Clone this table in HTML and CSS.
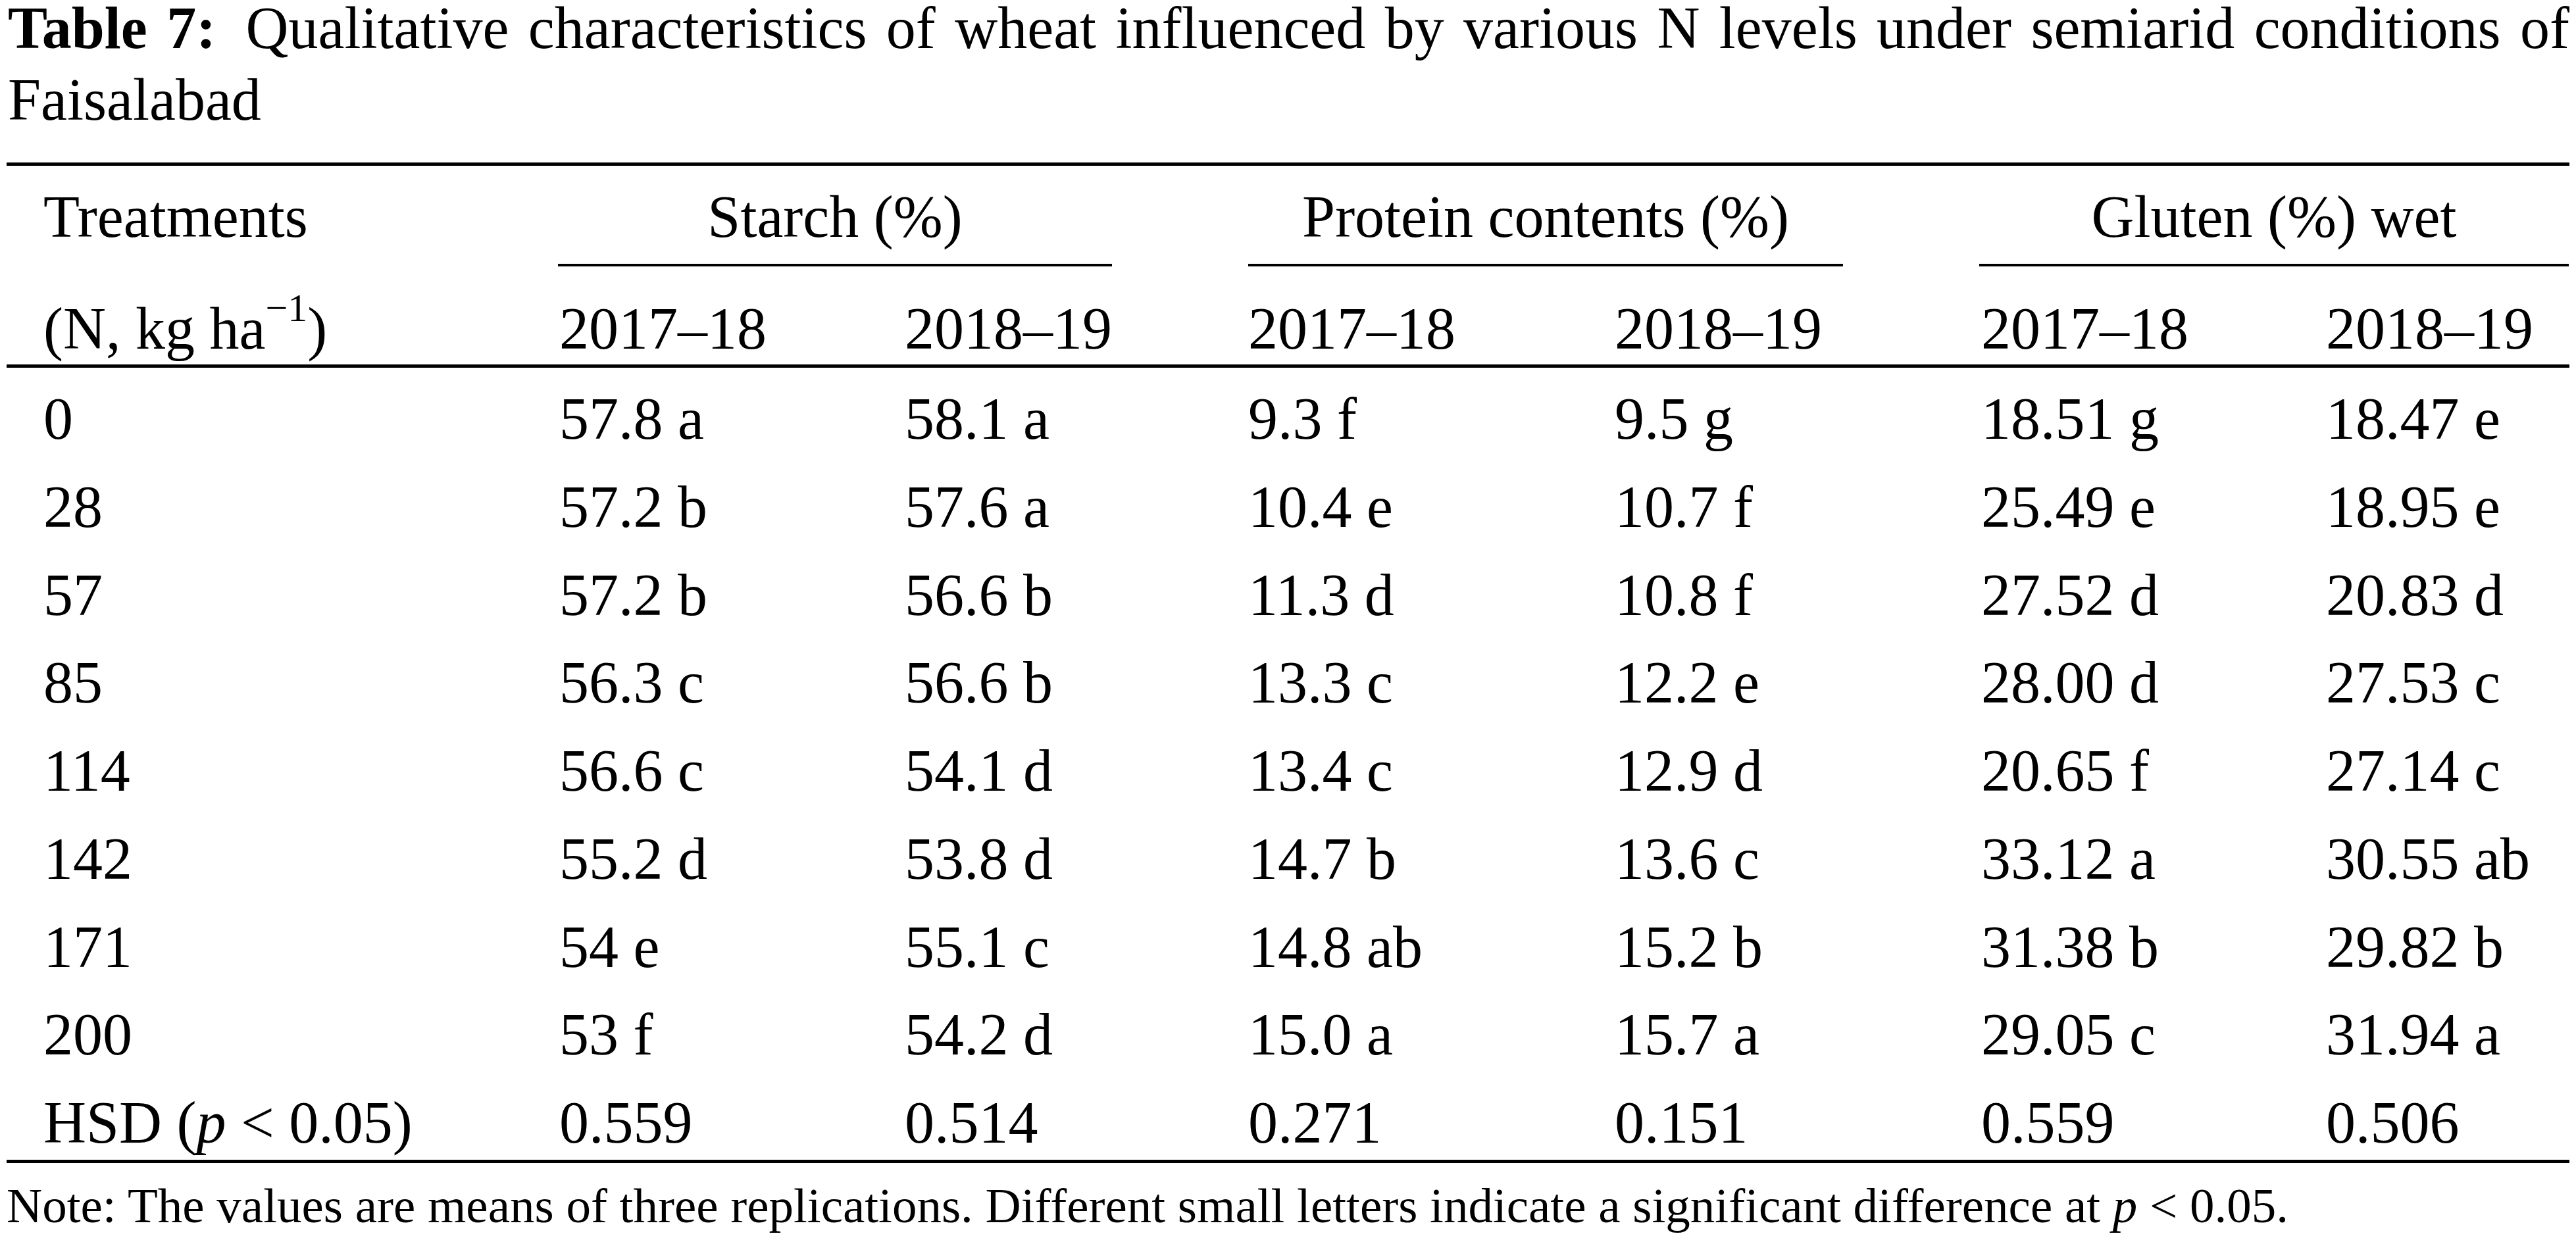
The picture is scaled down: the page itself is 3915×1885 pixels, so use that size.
FILE: index.html
```html
<!DOCTYPE html>
<html lang="en">
<head>
<meta charset="utf-8">
<title>Table 7</title>
<link rel="stylesheet" href="styles.css">
</head>
<body>
<div class="page">
  <p class="caption"><b class="label">Table 7:</b> Qualitative characteristics of wheat influenced by various N levels under semiarid conditions of Faisalabad</p>
  <div class="table">
    <div class="cell h1 first">Treatments</div>
    <div class="cell h1 group g-starch">Starch (%)</div>
    <div class="cell h1 group g-protein">Protein contents (%)</div>
    <div class="cell h1 group g-gluten">Gluten (%) wet</div>

    <div class="cell h2 first">(N, kg ha<sup class="sup">&minus;1</sup>)</div>
    <div class="cell h2">2017–18</div>
    <div class="cell h2">2018–19</div>
    <div class="cell h2">2017–18</div>
    <div class="cell h2">2018–19</div>
    <div class="cell h2">2017–18</div>
    <div class="cell h2">2018–19</div>

    <div class="cell first">0</div><div class="cell">57.8 a</div><div class="cell">58.1 a</div><div class="cell">9.3 f</div><div class="cell">9.5 g</div><div class="cell">18.51 g</div><div class="cell">18.47 e</div>
    <div class="cell first">28</div><div class="cell">57.2 b</div><div class="cell">57.6 a</div><div class="cell">10.4 e</div><div class="cell">10.7 f</div><div class="cell">25.49 e</div><div class="cell">18.95 e</div>
    <div class="cell first">57</div><div class="cell">57.2 b</div><div class="cell">56.6 b</div><div class="cell">11.3 d</div><div class="cell">10.8 f</div><div class="cell">27.52 d</div><div class="cell">20.83 d</div>
    <div class="cell first">85</div><div class="cell">56.3 c</div><div class="cell">56.6 b</div><div class="cell">13.3 c</div><div class="cell">12.2 e</div><div class="cell">28.00 d</div><div class="cell">27.53 c</div>
    <div class="cell first">114</div><div class="cell">56.6 c</div><div class="cell">54.1 d</div><div class="cell">13.4 c</div><div class="cell">12.9 d</div><div class="cell">20.65 f</div><div class="cell">27.14 c</div>
    <div class="cell first">142</div><div class="cell">55.2 d</div><div class="cell">53.8 d</div><div class="cell">14.7 b</div><div class="cell">13.6 c</div><div class="cell">33.12 a</div><div class="cell">30.55 ab</div>
    <div class="cell first">171</div><div class="cell">54 e</div><div class="cell">55.1 c</div><div class="cell">14.8 ab</div><div class="cell">15.2 b</div><div class="cell">31.38 b</div><div class="cell">29.82 b</div>
    <div class="cell first">200</div><div class="cell">53 f</div><div class="cell">54.2 d</div><div class="cell">15.0 a</div><div class="cell">15.7 a</div><div class="cell">29.05 c</div><div class="cell">31.94 a</div>
    <div class="cell first">HSD (<i>p</i> &lt; 0.05)</div><div class="cell">0.559</div><div class="cell">0.514</div><div class="cell">0.271</div><div class="cell">0.151</div><div class="cell">0.559</div><div class="cell">0.506</div>
  </div>
  <p class="note">Note: The values are means of three replications. Different small letters indicate a significant difference at <i>p</i> &lt; 0.05.</p>
</div>
</body>
</html>
```
FILE: styles.css
```css
html, body {
  margin: 0;
  padding: 0;
  background: #ffffff;
}

body {
  font-family: "Liberation Serif", "Times New Roman", serif;
  color: #000000;
}

.page {
  width: 3895px;
  margin-left: 10px;
}

.caption {
  margin: -12px 0 41px 2px;
  font-size: 90px;
  line-height: 109px;
  text-align: justify;
}

.label {
  font-weight: bold;
  margin-right: 16px;
}

.table {
  display: grid;
  grid-template-columns: 840px 525px 522px 557px 557px 524px 370px;
  border-top: 5px solid #000;
  border-bottom: 5px solid #000;
  font-size: 90px;
}

.cell {
  padding-top: 22px;
  line-height: 111.75px;
  white-space: nowrap;
}

.first {
  padding-left: 56px;
}

.h1 {
  padding-top: 22px;
  padding-bottom: 15px;
  line-height: 112px;
  border-bottom: 4px solid transparent;
}

.group {
  grid-column: span 2;
  text-align: center;
  border-bottom-color: #000;
}

.g-starch {
  margin-left: -2px;
  margin-right: 207px;
}

.g-protein {
  margin-right: 210px;
}

.g-gluten {
  margin-left: -3px;
  margin-right: 1px;
}

.h2 {
  padding-top: 41px;
  line-height: 108px;
  border-bottom: 5px solid #000;
}

.sup {
  font-size: 60px;
  line-height: 0;
  vertical-align: 42px;
}

.note {
  margin: 0;
  padding-top: 20px;
  font-size: 75px;
  line-height: 90px;
  white-space: nowrap;
}
```
